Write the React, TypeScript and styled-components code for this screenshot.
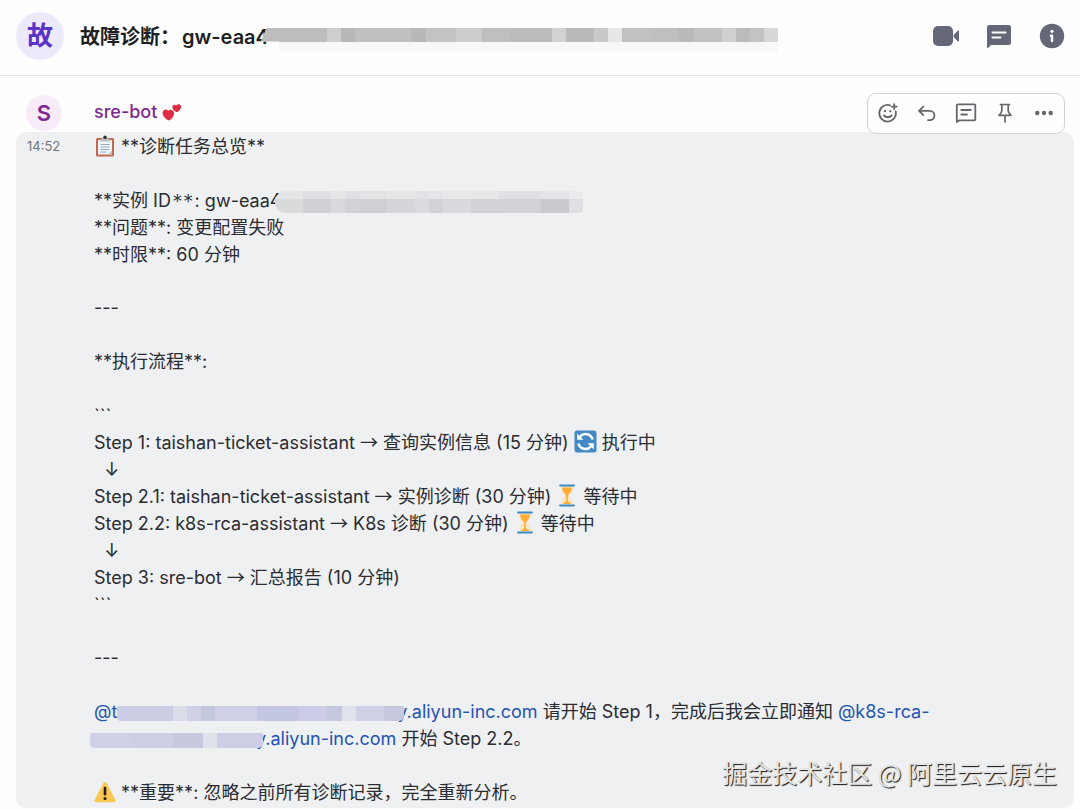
import React from "react";
import styled, { createGlobalStyle } from "styled-components";

const GlobalStyle = createGlobalStyle`
  * { box-sizing: border-box; }
  body {
    margin: 0;
    background: #fefefe;
    color: #2a2c31;
    font-family: Inter, "Noto Sans CJK SC", sans-serif;
    font-size: 18px;
    line-height: 27px;
  }
  svg { display: block; }
`;

const Page = styled.main`
  position: relative;
`;

const Header = styled.header`
  display: flex;
  align-items: center;
  height: 76px;
  padding: 0 15px 4px 16px;
  border-bottom: 1px solid #e3e4e8;
`;

const Avatar = styled.div<{ $size: number; $bg: string; $color: string; $font: number }>`
  display: flex;
  align-items: center;
  justify-content: center;
  flex: none;
  width: ${(p) => p.$size}px;
  height: ${(p) => p.$size}px;
  border-radius: 50%;
  background: ${(p) => p.$bg};
  color: ${(p) => p.$color};
  font-size: ${(p) => p.$font}px;
  font-weight: 600;
`;

const Title = styled.h1`
  flex: 1;
  display: flex;
  align-items: center;
  margin: 2px 0 0 16px;
  font-size: 20px;
  line-height: 28px;
  font-weight: 600;
  color: #1d1f23;
  white-space: nowrap;
`;

const TitleLabel = styled.span`
  margin-right: 2px;
`;

const HeaderActions = styled.div`
  display: flex;
  gap: 27px;
`;

const HeaderButton = styled.button`
  width: 26px;
  height: 26px;
  padding: 0;
  border: 0;
  background: none;
  color: #646777;
`;

const Sender = styled.div`
  display: flex;
  align-items: flex-start;
  height: 56px;
  padding: 17px 15px 0 26px;
`;

const SenderAvatar = styled(Avatar)`
  margin-top: 2px;
`;

const SenderName = styled.div`
  display: flex;
  align-items: center;
  gap: 5px;
  flex: 1;
  height: 37px;
  margin-left: 32px;
  color: #7e2a93;
  font-weight: 500;
`;

const Toolbar = styled.div`
  position: relative;
  z-index: 1;
  display: flex;
  height: 41px;
  padding: 0 1px 1px 0;
  border: 1px solid #cdd3d8;
  border-radius: 9px;
  background: #fefefe;
`;

const ToolButton = styled.button`
  display: flex;
  align-items: center;
  justify-content: center;
  width: 39px;
  padding: 0;
  border: 0;
  background: none;
  color: #63666b;
`;

const Message = styled.article`
  display: flex;
  margin: 0 6px 2px 16px;
  padding: 1px 0 2px;
  border-radius: 10px;
  background: #eff0f2;
`;

const Time = styled.time`
  flex: none;
  width: 78px;
  padding-left: 11px;
  font-size: 13px;
  color: #71757b;
`;

const Content = styled.div`
  display: flex;
  flex-direction: column;
  gap: 26px;
  flex: 1;
`;

const Section = styled.section`
  display: flex;
  flex-direction: column;
  gap: 27px;
`;

const Text = styled.p`
  margin: 0;
  white-space: pre-wrap;
`;

const ThinArrow = styled.span`
  font-family: "Noto Sans CJK SC", sans-serif;
  line-height: 1;
`;

const CapAsterisks = styled.span`
  margin: 0 1px;
  font-family: "DejaVu Sans Mono", monospace;
  line-height: 1;
`;

const Mention = styled.a`
  color: #2553b4;
  text-decoration: none;
`;

const Emoji = styled.svg`
  display: inline-block;
  vertical-align: -4px;
`;

const Mask = styled.span<{ $left: number; $right: number }>`
  position: relative;
  display: inline-flex;
  overflow: hidden;
  vertical-align: -3px;
  margin: 0 ${(p) => p.$right}px 0 ${(p) => p.$left}px;
`;

const TitleMask = styled(Mask)`
  height: 24px;
  align-self: flex-start;
  margin-top: 6px;
  background: #f8f8f8;
  clip-path: polygon(6px 0, 100% 0, 100% 100%, 18px 100%, 18px 14px, 0 14px);
`;

const IdMask = styled(Mask)`
  height: 22px;
  vertical-align: -6px;
  border-radius: 12px 4px 4px 12px;
`;

const MentionMask = styled(Mask)`
  height: 15px;
  vertical-align: -3px;
  border-radius: 2px 0 5px 4px;
`;

const Tile = styled.span<{ $width: number; $color: string; $top?: string; $height?: number }>`
  width: ${(p) => p.$width}px;
  height: ${(p) => (p.$height ? p.$height + "px" : "100%")};
  background: ${(p) => (p.$top ? `linear-gradient(${p.$top} 8px, ${p.$color} 8px)` : p.$color)};
`;

const Watermark = styled.div`
  position: absolute;
  right: 23px;
  bottom: 18px;
  color: #e6e6e6;
  font-family: "Noto Sans CJK SC", sans-serif;
  font-size: 25px;
  line-height: 36px;
  white-space: nowrap;
  text-shadow: 1px 1px 1px #111;
`;

type TileData = [number, string, string?];

const titleTiles: TileData[] = [
  [66, "#bdbdbd"], [14, "#cecece"], [14, "#b8b8b8"], [56, "#c0c0c0"], [15, "#b8b8b8"],
  [30, "#c3c3c3"], [26, "#cdcdcd"], [28, "#bfbfbf"], [42, "#bcbcbc"], [14, "#d2d2d2"],
  [28, "#bababa"], [14, "#c9c9c9"], [14, "#e7e7e7"], [28, "#c1c1c1"], [28, "#bfbfbf"],
  [16, "#b9b9b9"], [28, "#c1c1c1"], [14, "#d0d0d0"], [14, "#bbbbbb"], [14, "#c3c3c3"], [14, "#d8d8d8"],
];

const idTiles: TileData[] = [
  [28, "#d9dadc", "#e5e6e8"], [28, "#d0d1d5", "#dfe0e3"], [14, "#d8d9dc", "#e5e6e8"],
  [14, "#d2d3d7", "#dfe0e3"], [28, "#cfd0d4", "#e2e3e5"], [28, "#d5d6da", "#e5e6e8"],
  [14, "#dadbde", "#e1e2e5"], [14, "#d1d2d6", "#e4e5e8"], [28, "#d9dadd", "#e7e8ea"],
  [28, "#d1d2d6", "#e6e7e9"], [42, "#d2d3d7", "#dfe0e3"], [28, "#c9cace", "#e3e4e7"],
  [14, "#dedfe2", "#eaebed"],
];

const firstMentionTiles: TileData[] = [
  [56, "#cacde4"], [14, "#dadde9"], [14, "#ced1e5"], [14, "#c4c8df"], [42, "#cdd0e6"],
  [42, "#c3c8e0"], [28, "#cacde5"], [15, "#c5c9e0"], [14, "#e0e3ec"], [28, "#cfd1e6"], [20, "#c5c8df"],
];

const secondMentionTiles: TileData[] = [
  [40, "#cfd1e6"], [43, "#cdcfe5"], [30, "#c6c9e0"], [14, "#dfe1eb"], [46, "#cccee5"],
];

const tiles = (data: TileData[], height?: number) =>
  data.map(([width, color, top], i) => (
    <Tile key={i} $width={width} $color={color} $top={top} $height={height} />
  ));

const stroke = {
  fill: "none",
  stroke: "currentColor",
  strokeWidth: 1.8,
  strokeLinecap: "round" as const,
  strokeLinejoin: "round" as const,
};

const VideoIcon = () => (
  <svg width="26" height="26" viewBox="0 0 26 26" fill="currentColor">
    <rect x="0" y="3" width="20" height="20" rx="5" />
    <path d="M20.500 12.200 24.600 7.700c.5-.6 1.400-.2 1.400.5v9.600c0 .7-.9 1.100-1.400.5L20.500 13.800z" />
  </svg>
);

const ChatFilledIcon = () => (
  <svg width="26" height="26" viewBox="0 0 26 26">
    <path d="M3.500 2h19A2.500 2.500 0 0 1 25 4.500v15a2.500 2.500 0 0 1-2.500 2.500H5l-2.700 2.700C1.800 25.200 1 24.900 1 24.200V4.500A2.500 2.500 0 0 1 3.500 2z" fill="currentColor" />
    <path d="M6.500 9.500h13M6.500 14.500h8" stroke="#fefefe" strokeWidth="2" strokeLinecap="round" />
  </svg>
);

const InfoIcon = () => (
  <svg width="26" height="26" viewBox="0 0 26 26">
    <circle cx="13" cy="13" r="12.200" fill="currentColor" />
    <circle cx="13" cy="8.300" r="1.600" fill="#fefefe" />
    <path d="M12 12.800h1V18" fill="none" stroke="#fefefe" strokeWidth="2.400" strokeLinecap="round" strokeLinejoin="round" />
  </svg>
);

const ReactIcon = () => (
  <svg width="22" height="22" viewBox="0 0 22 22" {...stroke}>
    <path d="M13 3.300A8.300 8.300 0 1 0 18.700 9.500" />
    <path d="M7 13.400c1.800 2.400 5.900 2.400 7.700 0" strokeWidth="1.900" />
    <path d="M8 9v.2M13.400 9v.2" strokeWidth="2.200" />
    <path d="M17.200 2.100v5M14.700 4.600h5" />
  </svg>
);

const ReplyIcon = () => (
  <svg width="22" height="22" viewBox="0 0 22 22" {...stroke}>
    <path d="M7.300 4.600 3 8.900l4.300 4.300M3 8.900h10.800a4.600 4.600 0 0 1 0 9.200H12" />
  </svg>
);

const ThreadIcon = () => (
  <svg width="22" height="22" viewBox="0 0 22 22" {...stroke}>
    <path d="M3 2.300h16.300c.6 0 1 .4 1 1v14c0 .6-.4 1-1 1H4.500L1.800 20V3.300c0-.6.500-1 1.200-1z" />
    <path d="M6.300 8h9.500M6.300 12.500h5.700" />
  </svg>
);

const PinIcon = () => (
  <svg width="22" height="22" viewBox="0 0 22 22" {...stroke} strokeWidth={1.7}>
    <path d="M6.500 2.500h9M7.800 2.500v6.300c0 1.800-1.200 3-2.800 4.500h12c-1.600-1.500-2.800-2.700-2.800-4.500V2.500M11 13.300V20" />
  </svg>
);

const MoreIcon = () => (
  <svg width="22" height="22" viewBox="0 0 22 22" fill="currentColor">
    <circle cx="4.300" cy="11" r="2.200" />
    <circle cx="11" cy="11" r="2.200" />
    <circle cx="17.700" cy="11" r="2.200" />
  </svg>
);

const Hearts = () => (
  <svg width="20" height="20" viewBox="0 0 20 20" fill="#dd2e44">
    <path d="M7.400 18.600C3.200 17 .2 13.600.7 10.200c.4-2.800 3.800-3.700 5.400-1.500C8 6.800 11.500 7.600 12 10.500c.5 3-1.700 6-4.600 8.100z" />
    <path d="M15.200 10.300c-2.800-.8-4.800-2.800-4.800-5.200 0-2.200 2.500-3 3.900-1.500C15.200 1.800 18.200 1.600 18.900 3.800c.7 2.300-1.200 4.900-3.700 6.500z" />
  </svg>
);

const Clipboard = () => (
  <Emoji width="22" height="22" viewBox="0 0 22 22" aria-label="clipboard" role="img">
    <rect x="2" y="3" width="18" height="18.500" rx="1.500" fill="#c1694f" />
    <path d="M4 5h14v14.500H4z" fill="#f2f5f7" />
    <path d="M14 19.500h4V15.500z" fill="#b7c5cf" />
    <path d="M6.500 9.500h9M6.500 12h9M6.500 14.500h9M6.500 17h6" stroke="#93a8b8" strokeWidth="1" />
    <path d="M5.500 6.500c0-2 1.500-3 3.500-3h4c2 0 3.500 1 3.500 3z" fill="#b8c4cc" />
    <circle cx="11" cy="2.200" r="1.700" fill="#292f33" />
  </Emoji>
);

const Cycle = () => (
  <Emoji width="23" height="23" viewBox="0 0 23 23" aria-label="in progress" role="img">
    <rect x=".5" y=".5" width="22" height="22" rx="2.500" fill="#4289c6" />
    <path d="M4.400 13.500a7.300 7.300 0 0 0 12.600 3M18.600 9.500a7.300 7.300 0 0 0-12.600-3" fill="none" stroke="#fff" strokeWidth="2.500" />
    <path d="M19.800 19.500v-6.300h-6.300zM3.200 3.500v6.300h6.300z" fill="#fff" />
  </Emoji>
);

const Hourglass = () => (
  <Emoji width="22" height="23" viewBox="0 0 22 23" aria-label="waiting" role="img">
    <path d="M5 2.500h12c0 4.500-2 7-4 9 2 2 4 4.500 4 9H5c0-4.500 2-7 4-9-2-2-4-4.500-4-9z" fill="#f8e5c5" />
    <path d="M6 3.500h10c-.4 3.500-2 6-4.200 7.800v6L15.500 20h-9l3.700-2.700v-6C8 9.500 6.400 7 6 3.500z" fill="#ffac33" />
    <path d="M4.200 1.500h13.600M4.200 21.500h13.600" stroke="#3b88c3" strokeWidth="2.200" strokeLinecap="round" />
  </Emoji>
);

const Warning = () => (
  <Emoji width="22" height="22" viewBox="0 0 22 22" aria-label="warning" role="img">
    <path d="M9.600 1.700c.6-1.100 2.200-1.100 2.800 0l9 17.300c.6 1.100-.1 2.200-1.400 2.200H2C.7 21.200 0 20.100.6 19z" fill="#fcc651" />
    <path d="M11 7v6.300" stroke="#231f20" strokeWidth="2.600" strokeLinecap="round" />
    <circle cx="11" cy="17.500" r="1.500" fill="#231f20" />
  </Emoji>
);

const headerActions = [
  { label: "视频会议", Icon: VideoIcon },
  { label: "消息列", Icon: ChatFilledIcon },
  { label: "详情", Icon: InfoIcon },
];

const messageActions = [
  { label: "添加表情", Icon: ReactIcon },
  { label: "回复", Icon: ReplyIcon },
  { label: "消息列", Icon: ThreadIcon },
  { label: "置顶", Icon: PinIcon },
  { label: "更多", Icon: MoreIcon },
];

const To = () => <ThinArrow>→</ThinArrow>;

export default function App() {
  return (
    <Page>
      <GlobalStyle />
      <Header>
        <Avatar $size={48} $bg="#ece9fb" $color="#5a32c8" $font={26}>故</Avatar>
        <Title>
          <TitleLabel>故障诊断：</TitleLabel>gw-eaa4
          <TitleMask $left={-8} $right={0}>{tiles(titleTiles, 14)}</TitleMask>
        </Title>
        <HeaderActions>
          {headerActions.map(({ label, Icon }) => (
            <HeaderButton key={label} type="button" aria-label={label}><Icon /></HeaderButton>
          ))}
        </HeaderActions>
      </Header>

      <Sender>
        <SenderAvatar $size={36} $bg="#f8ebf8" $color="#7e2a93" $font={22}>S</SenderAvatar>
        <SenderName>sre-bot<Hearts /></SenderName>
        <Toolbar role="toolbar">
          {messageActions.map(({ label, Icon }) => (
            <ToolButton key={label} type="button" aria-label={label}><Icon /></ToolButton>
          ))}
        </Toolbar>
      </Sender>

      <Message>
        <Time>14:52</Time>
        <Content>
          <Section>
            <Text><Clipboard /> **诊断任务总览**</Text>
            <div>
              <Text>**实例 ID<CapAsterisks>**</CapAsterisks>: gw-eaa4<IdMask $left={-6} $right={0}>{tiles(idTiles)}</IdMask></Text>
              <Text>**问题**: 变更配置失败</Text>
              <Text>**时限**: 60 分钟</Text>
            </div>
          </Section>
          <Section>
            <Text>---</Text>
            <Text>**执行流程**:</Text>
            <div>
              <Text>```</Text>
              <Text>Step 1: taishan-ticket-assistant <To /> 查询实例信息 (15 分钟) <Cycle /> 执行中</Text>
              <Text>{"  ↓"}</Text>
              <Text>Step 2.1: taishan-ticket-assistant <To /> 实例诊断 (30 分钟) <Hourglass /> 等待中</Text>
              <Text>Step 2.2: k8s-rca-assistant <To /> K8s 诊断 (30 分钟) <Hourglass /> 等待中</Text>
              <Text>{"  ↓"}</Text>
              <Text>Step 3: sre-bot <To /> 汇总报告 (10 分钟)</Text>
              <Text>```</Text>
            </div>
          </Section>
          <Section>
            <Text>---</Text>
            <Text>
              <Mention href="#">@t<MentionMask $left={0} $right={-7}>{tiles(firstMentionTiles)}</MentionMask>y.aliyun-inc.com</Mention>
              {" 请开始 Step 1，完成后我会立即通知 "}
              <Mention href="#">@k8s-rca-<br /><MentionMask $left={-4} $right={-7}>{tiles(secondMentionTiles)}</MentionMask>y.aliyun-inc.com</Mention>
              {" 开始 Step 2.2。"}
            </Text>
            <Text><Warning /> **重要**: 忽略之前所有诊断记录，完全重新分析。</Text>
          </Section>
        </Content>
      </Message>
      <Watermark>掘金技术社区 @ 阿里云云原生</Watermark>
    </Page>
  );
}
